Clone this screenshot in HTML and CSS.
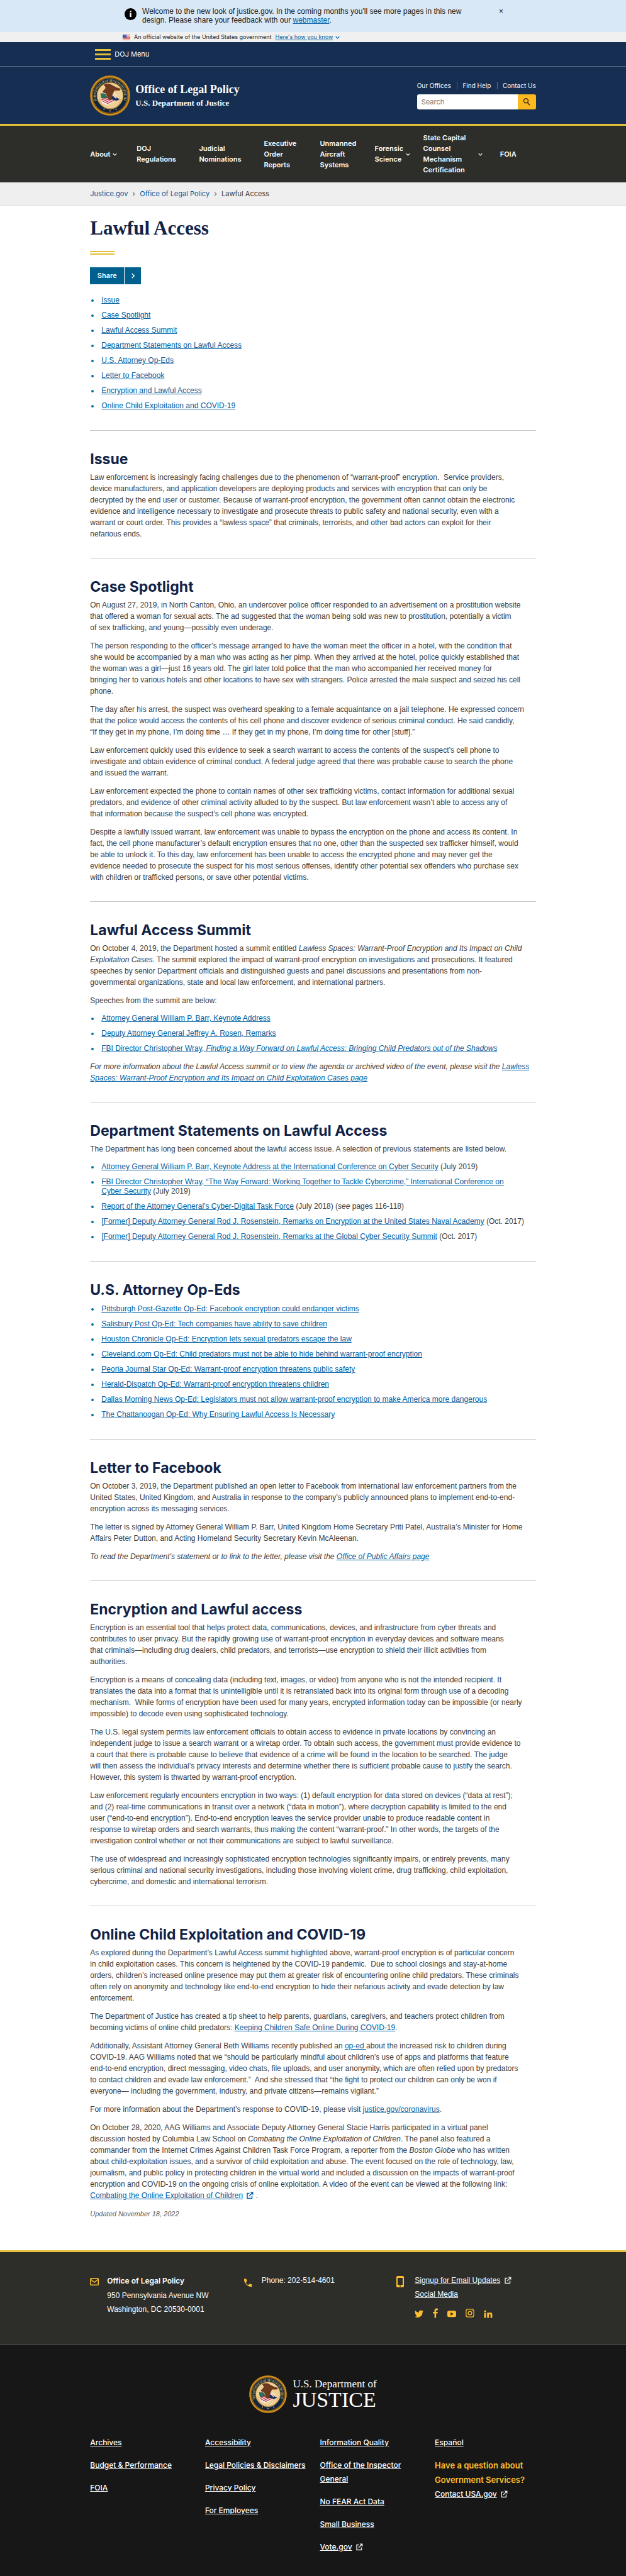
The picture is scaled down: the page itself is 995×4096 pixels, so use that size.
FILE: index.html
```html
<!DOCTYPE html>
<html lang="en">
<head>
<meta charset="utf-8">
<meta name="viewport" content="width=device-width, initial-scale=1">
<title>Office of Legal Policy | Lawful Access</title>
<link rel="stylesheet" href="styles.css">
</head>
<body>
<svg class="sprite" aria-hidden="true">
  <symbol id="seal" viewBox="0 0 100 100">
    <circle cx="50" cy="50" r="49.5" fill="#6b4a12"/>
    <circle cx="50" cy="50" r="47.5" fill="none" stroke="#cf8d1e" stroke-width="4"/>
    <circle cx="50" cy="50" r="43.5" fill="#12233f" stroke="#8f6a1c" stroke-width="1.5"/>
    <path d="M14 63A38 38 0 1 1 86 63" fill="none" stroke="#9d9258" stroke-width="6.5" stroke-dasharray="1.4 1.5 2.2 2.2 1.2 1.8"/>
    <circle cx="50" cy="50" r="32.5" fill="#eecf96" stroke="#b98427" stroke-width="1.6"/>
    <path d="M24 57a26 26 0 0 0 52 0" fill="none" stroke="#c9a76c" stroke-width="3" stroke-dasharray="1.2 1"/>
    <path d="M26 45l10-3 3 5 7 11-9 3-9-5z" fill="#2f6d58"/>
    <path d="M28 39l11 1-1 5-9-1z" fill="#f3ead9"/>
    <path d="M30 58l20-4 16 4-8 8-16 8-12-6z" fill="#f5efe9"/>
    <path d="M29 61l16-7M32 65l20-10M36 68l22-11M42 70l18-9" stroke="#c22a48" stroke-width="2.2"/>
    <path d="M56 50l18 9-8 4-14-4z" fill="#1d2c59"/>
    <path d="M34 23q12-6 21 1 12 7 21 9l-1 4q-10 1-14 0l-4 8q-2 7-3 16l-9-1q-2-10-6-16l-8-2q-1-3 3-5l5-6q-1-4-5-8z" fill="#6d3a1d"/>
    <path d="M59 44l10 8M56 48l9 9" stroke="#f5efe9" stroke-width="2"/>
    <circle cx="35" cy="84" r="1.8" fill="#c99636"/><circle cx="50" cy="88" r="1.8" fill="#c99636"/><circle cx="65" cy="84" r="1.8" fill="#c99636"/>
  </symbol>
  <symbol id="external" viewBox="0 0 24 24">
    <path d="M11 5H4v16h15v-8" fill="none" stroke="currentColor" stroke-width="3"/>
    <path d="M10 14L19 5" stroke="currentColor" stroke-width="3"/>
    <path d="M13 1h10v10z" fill="currentColor"/>
  </symbol>
  <symbol id="chevron-down" viewBox="0 0 10 10">
    <path d="M1 3l4 4 4-4" fill="none" stroke="currentColor" stroke-width="1.8"/>
  </symbol>
  <symbol id="chevron-right" viewBox="0 0 10 10">
    <path d="M3 1l4 4-4 4" fill="none" stroke="currentColor" stroke-width="1.6"/>
  </symbol>
</svg>

<div class="alert">
  <div class="alert-inner">
    <svg class="alert-icon" viewBox="0 0 20 20" aria-hidden="true"><circle cx="10" cy="10" r="10"/><path d="M8.7 4.5h2.6v2.4H8.7zM8.7 8.4h2.6v6.4H8.7z" fill="#fff"/></svg>
    <p>Welcome to the new look of justice.gov. In the coming months you'll see more pages in this new<br>design. Please share your feedback with our <a href="#">webmaster</a>.</p>
    <button class="alert-close" type="button" aria-label="Close">×</button>
  </div>
</div>

<div class="gov-banner">
  <div class="gov-inner">
    <svg class="flag" viewBox="0 0 24 17" aria-hidden="true"><path fill="#fff" d="M0 0h24v17H0z"/><path d="M0 1.2h24M0 5h24M0 8.8h24M0 12.4h24M0 16h24" stroke="#db3e1f" stroke-width="1.8"/><path fill="#1e33b1" d="M0 0h12v9.5H0z"/><path d="M1.5 2.5h10M1.5 5h10M1.5 7.5h10" stroke="#fff" stroke-dasharray="1.2 1.3"/></svg>
    <span>An official website of the United States government</span>
    <button type="button" class="gov-toggle"><span>Here's how you know</span><svg class="chev"><use href="#chevron-down"/></svg></button>
  </div>
</div>

<header>
  <div class="menu-bar">
    <div class="container">
      <button class="menu-button" type="button"><span class="burger"><i></i><i></i><i></i></span>DOJ Menu</button>
    </div>
  </div>
  <div class="masthead">
    <div class="container masthead-inner">
      <a class="brand" href="#">
        <svg class="brand-seal" role="img" aria-label="Department of Justice seal"><use href="#seal"/></svg>
        <span class="brand-text"><span class="brand-name">Office of Legal Policy</span><span class="brand-dept">U.S. Department of Justice</span></span>
      </a>
      <div class="tools">
        <ul class="utility"><li><a href="#">Our Offices</a></li><li><a href="#">Find Help</a></li><li><a href="#">Contact Us</a></li></ul>
        <form class="search">
          <input type="search" aria-label="Search" placeholder="Search">
          <button type="button" aria-label="Submit search"><svg viewBox="0 0 20 20" aria-hidden="true"><circle cx="8.5" cy="7.5" r="5" fill="none" stroke="#2d2e2a" stroke-width="2"/><path d="M12 11.5l5 6" stroke="#2d2e2a" stroke-width="2"/></svg></button>
        </form>
      </div>
    </div>
  </div>
  <nav class="main-nav" aria-label="Main">
    <ul class="container">
      <li><a href="#">About</a><svg class="chev"><use href="#chevron-down"/></svg></li>
      <li><a href="#">DOJ<br>Regulations</a></li>
      <li><a href="#">Judicial<br>Nominations</a></li>
      <li><a href="#">Executive<br>Order<br>Reports</a></li>
      <li><a href="#">Unmanned<br>Aircraft<br>Systems</a></li>
      <li><a href="#">Forensic<br>Science</a><svg class="chev"><use href="#chevron-down"/></svg></li>
      <li class="wide"><a href="#">State Capital<br>Counsel<br>Mechanism<br>Certification</a><svg class="chev"><use href="#chevron-down"/></svg></li>
      <li><a href="#">FOIA</a></li>
    </ul>
  </nav>
</header>

<nav class="breadcrumb" aria-label="Breadcrumbs">
  <ol class="container">
    <li><a href="#">Justice.gov</a><svg class="chev"><use href="#chevron-right"/></svg></li>
    <li><a href="#">Office of Legal Policy</a><svg class="chev"><use href="#chevron-right"/></svg></li>
    <li>Lawful Access</li>
  </ol>
</nav>

<main class="container">
  <h1>Lawful Access</h1>
  <div class="title-rule"></div>
  <button class="share" type="button"><span class="share-label">Share</span><span class="share-arrow"><svg class="chev"><use href="#chevron-right"/></svg></span></button>
  <ul class="links toc">
    <li><a href="#issue">Issue</a></li>
    <li><a href="#case">Case Spotlight</a></li>
    <li><a href="#summit">Lawful Access Summit</a></li>
    <li><a href="#statements">Department Statements on Lawful Access</a></li>
    <li><a href="#opeds">U.S. Attorney Op-Eds</a></li>
    <li><a href="#letter">Letter to Facebook</a></li>
    <li><a href="#encryption">Encryption and Lawful Access</a></li>
    <li><a href="#covid">Online Child Exploitation and COVID-19</a></li>
  </ul>

  <section id="issue">
    <h2>Issue</h2>
    <p>Law enforcement is increasingly facing challenges due to the phenomenon of “warrant-proof” encryption.&nbsp; Service providers,<br>
    device manufacturers, and application developers are deploying products and services with encryption that can only be<br>
    decrypted by the end user or customer. Because of warrant-proof encryption, the government often cannot obtain the electronic<br>
    evidence and intelligence necessary to investigate and prosecute threats to public safety and national security, even with a<br>
    warrant or court order. This provides a “lawless space” that criminals, terrorists, and other bad actors can exploit for their<br>
    nefarious ends.</p>
  </section>

  <section id="case">
    <h2>Case Spotlight</h2>
    <p>On August 27, 2019, in North Canton, Ohio, an undercover police officer responded to an advertisement on a prostitution website<br>
    that offered a woman for sexual acts. The ad suggested that the woman being sold was new to prostitution, potentially a victim<br>
    of sex trafficking, and young—possibly even underage.</p>
    <p>The person responding to the officer’s message arranged to have the woman meet the officer in a hotel, with the condition that<br>
    she would be accompanied by a man who was acting as her pimp. When they arrived at the hotel, police quickly established that<br>
    the woman was a girl—just 16 years old. The girl later told police that the man who accompanied her received money for<br>
    bringing her to various hotels and other locations to have sex with strangers. Police arrested the male suspect and seized his cell<br>
    phone.</p>
    <p>The day after his arrest, the suspect was overheard speaking to a female acquaintance on a jail telephone. He expressed concern<br>
    that the police would access the contents of his cell phone and discover evidence of serious criminal conduct. He said candidly,<br>
    “If they get in my phone, I’m doing time … If they get in my phone, I’m doing time for other [stuff].”</p>
    <p>Law enforcement quickly used this evidence to seek a search warrant to access the contents of the suspect’s cell phone to<br>
    investigate and obtain evidence of criminal conduct. A federal judge agreed that there was probable cause to search the phone<br>
    and issued the warrant.</p>
    <p>Law enforcement expected the phone to contain names of other sex trafficking victims, contact information for additional sexual<br>
    predators, and evidence of other criminal activity alluded to by the suspect. But law enforcement wasn’t able to access any of<br>
    that information because the suspect’s cell phone was encrypted.</p>
    <p>Despite a lawfully issued warrant, law enforcement was unable to bypass the encryption on the phone and access its content. In<br>
    fact, the cell phone manufacturer’s default encryption ensures that no one, other than the suspected sex trafficker himself, would<br>
    be able to unlock it. To this day, law enforcement has been unable to access the encrypted phone and may never get the<br>
    evidence needed to prosecute the suspect for his most serious offenses, identify other potential sex offenders who purchase sex<br>
    with children or trafficked persons, or save other potential victims.</p>
  </section>

  <section id="summit">
    <h2>Lawful Access Summit</h2>
    <p>On October 4, 2019, the Department hosted a summit entitled <em>Lawless Spaces: Warrant-Proof Encryption and Its Impact on Child<br>
    Exploitation Cases</em>. The summit explored the impact of warrant-proof encryption on investigations and prosecutions. It featured<br>
    speeches by senior Department officials and distinguished guests and panel discussions and presentations from non-<br>
    governmental organizations, state and local law enforcement, and international partners.</p>
    <p>Speeches from the summit are below:</p>
    <ul class="links">
      <li><a href="#">Attorney General William P. Barr, Keynote Address</a></li>
      <li><a href="#">Deputy Attorney General Jeffrey A. Rosen, Remarks</a></li>
      <li><a href="#">FBI Director Christopher Wray, <em>Finding a Way Forward on Lawful Access: Bringing Child Predators out of the Shadows</em></a></li>
    </ul>
    <p><em>For more information about the Lawful Access summit or to view the agenda or archived video of the event, please visit the <a href="#">Lawless<br>
    Spaces: Warrant-Proof Encryption and Its Impact on Child Exploitation Cases page</a></em></p>
  </section>

  <section id="statements">
    <h2>Department Statements on Lawful Access</h2>
    <p>The Department has long been concerned about the lawful access issue. A selection of previous statements are listed below.</p>
    <ul class="links">
      <li><a href="#">Attorney General William P. Barr, Keynote Address at the International Conference on Cyber Security</a> (July 2019)</li>
      <li><a href="#">FBI Director Christopher Wray, “The Way Forward: Working Together to Tackle Cybercrime,” International Conference on<br>
      Cyber Security</a> (July 2019)</li>
      <li><a href="#">Report of the Attorney General’s Cyber-Digital Task Force</a> (July 2018) (<em>see</em> pages 116-118)</li>
      <li><a href="#">[Former] Deputy Attorney General Rod J. Rosenstein, Remarks on Encryption at the United States Naval Academy</a> (Oct. 2017)</li>
      <li><a href="#">[Former] Deputy Attorney General Rod J. Rosenstein, Remarks at the Global Cyber Security Summit</a> (Oct. 2017)</li>
    </ul>
  </section>

  <section id="opeds">
    <h2>U.S. Attorney Op-Eds</h2>
    <ul class="links">
      <li><a href="#">Pittsburgh Post-Gazette Op-Ed: Facebook encryption could endanger victims</a></li>
      <li><a href="#">Salisbury Post Op-Ed: Tech companies have ability to save children</a></li>
      <li><a href="#">Houston Chronicle Op-Ed: Encryption lets sexual predators escape the law</a></li>
      <li><a href="#">Cleveland.com Op-Ed: Child predators must not be able to hide behind warrant-proof encryption</a></li>
      <li><a href="#">Peoria Journal Star Op-Ed: Warrant-proof encryption threatens public safety</a></li>
      <li><a href="#">Herald-Dispatch Op-Ed: Warrant-proof encryption threatens children</a></li>
      <li><a href="#">Dallas Morning News Op-Ed: Legislators must not allow warrant-proof encryption to make America more dangerous</a></li>
      <li><a href="#">The Chattanoogan Op-Ed: Why Ensuring Lawful Access Is Necessary</a></li>
    </ul>
  </section>

  <section id="letter">
    <h2>Letter to Facebook</h2>
    <p>On October 3, 2019, the Department published an open letter to Facebook from international law enforcement partners from the<br>
    United States, United Kingdom, and Australia in response to the company’s publicly announced plans to implement end-to-end-<br>
    encryption across its messaging services.</p>
    <p>The letter is signed by Attorney General William P. Barr, United Kingdom Home Secretary Priti Patel, Australia’s Minister for Home<br>
    Affairs Peter Dutton, and Acting Homeland Security Secretary Kevin McAleenan.</p>
    <p><em>To read the Department’s statement or to link to the letter, please visit the <a href="#">Office of Public Affairs page</a></em></p>
  </section>

  <section id="encryption">
    <h2>Encryption and Lawful access</h2>
    <p>Encryption is an essential tool that helps protect data, communications, devices, and infrastructure from cyber threats and<br>
    contributes to user privacy. But the rapidly growing use of warrant-proof encryption in everyday devices and software means<br>
    that criminals—including drug dealers, child predators, and terrorists—use encryption to shield their illicit activities from<br>
    authorities.</p>
    <p>Encryption is a means of concealing data (including text, images, or video) from anyone who is not the intended recipient. It<br>
    translates the data into a format that is unintelligible until it is retranslated back into its original form through use of a decoding<br>
    mechanism.&nbsp; While forms of encryption have been used for many years, encrypted information today can be impossible (or nearly<br>
    impossible) to decode even using sophisticated technology.</p>
    <p>The U.S. legal system permits law enforcement officials to obtain access to evidence in private locations by convincing an<br>
    independent judge to issue a search warrant or a wiretap order. To obtain such access, the government must provide evidence to<br>
    a court that there is probable cause to believe that evidence of a crime will be found in the location to be searched. The judge<br>
    will then assess the individual’s privacy interests and determine whether there is sufficient probable cause to justify the search.<br>
    However, this system is thwarted by warrant-proof encryption.</p>
    <p>Law enforcement regularly encounters encryption in two ways: (1) default encryption for data stored on devices (“data at rest”);<br>
    and (2) real-time communications in transit over a network (“data in motion”), where decryption capability is limited to the end<br>
    user (“end-to-end encryption”). End-to-end encryption leaves the service provider unable to produce readable content in<br>
    response to wiretap orders and search warrants, thus making the content “warrant-proof.” In other words, the targets of the<br>
    investigation control whether or not their communications are subject to lawful surveillance.</p>
    <p>The use of widespread and increasingly sophisticated encryption technologies significantly impairs, or entirely prevents, many<br>
    serious criminal and national security investigations, including those involving violent crime, drug trafficking, child exploitation,<br>
    cybercrime, and domestic and international terrorism.</p>
  </section>

  <section id="covid">
    <h2>Online Child Exploitation and COVID-19</h2>
    <p>As explored during the Department’s Lawful Access summit highlighted above, warrant-proof encryption is of particular concern<br>
    in child exploitation cases. This concern is heightened by the COVID-19 pandemic.&nbsp; Due to school closings and stay-at-home<br>
    orders, children’s increased online presence may put them at greater risk of encountering online child predators. These criminals<br>
    often rely on anonymity and technology like end-to-end encryption to hide their nefarious activity and evade detection by law<br>
    enforcement.</p>
    <p>The Department of Justice has created a tip sheet to help parents, guardians, caregivers, and teachers protect children from<br>
    becoming victims of online child predators: <a href="#">Keeping Children Safe Online During COVID-19</a>.</p>
    <p>Additionally, Assistant Attorney General Beth Williams recently published an <a href="#">op-ed </a>about the increased risk to children during<br>
    COVID-19. AAG Williams noted that we “should be particularly mindful about children’s use of apps and platforms that feature<br>
    end-to-end encryption, direct messaging, video chats, file uploads, and user anonymity, which are often relied upon by predators<br>
    to contact children and evade law enforcement.”&nbsp; And she stressed that “the fight to protect our children can only be won if<br>
    everyone— including the government, industry, and private citizens—remains vigilant.”</p>
    <p>For more information about the Department’s response to COVID-19, please visit <a href="#">justice.gov/coronavirus</a>.</p>
    <p>On October 28, 2020, AAG Williams and Associate Deputy Attorney General Stacie Harris participated in a virtual panel<br>
    discussion hosted by Columbia Law School on <em>Combating the Online Exploitation of Children</em>. The panel also featured a<br>
    commander from the Internet Crimes Against Children Task Force Program, a reporter from the <em>Boston Globe</em> who has written<br>
    about child-exploitation issues, and a survivor of child exploitation and abuse. The event focused on the role of technology, law,<br>
    journalism, and public policy in protecting children in the virtual world and included a discussion on the impacts of warrant-proof<br>
    encryption and COVID-19 on the ongoing crisis of online exploitation. A video of the event can be viewed at the following link:<br>
    <a href="#">Combating the Online Exploitation of Children</a> <svg class="ext ext-link"><use href="#external"/></svg> .</p>
    <p class="updated">Updated November 18, 2022</p>
  </section>
</main>

<footer>
  <div class="contact">
    <div class="container contact-grid">
      <div class="contact-item">
        <svg class="icon-mail" viewBox="0 0 28 28" aria-hidden="true"><rect x="1.5" y="3.5" width="25" height="21" rx="2" fill="none" stroke="currentColor" stroke-width="3"/><path d="M3 7l11 9 11-9" fill="none" stroke="currentColor" stroke-width="3"/></svg>
        <address><strong>Office of Legal Policy</strong><br>950 Pennsylvania Avenue NW<br>Washington, DC 20530-0001</address>
      </div>
      <div class="contact-item">
        <svg class="icon-phone" viewBox="0 0 28 28" aria-hidden="true"><path d="M2 2h7l2 8-4 4q3 5 8 8l4-4 8 2v7q-11 1-18-7Q1 12 2 2z" fill="currentColor"/></svg>
        <span>Phone: 202-514-4601</span>
      </div>
      <div class="contact-item">
        <svg class="icon-mobile" viewBox="0 0 24 36" aria-hidden="true"><path fill-rule="evenodd" d="M4 0h16q4 0 4 4v28q0 4-4 4H4q-4 0-4-4V4q0-4 4-4zM4 6v22h16V6zM12 30a2 2 0 1 0 .1 0z" fill="currentColor"/></svg>
        <div>
          <a href="#">Signup for Email Updates</a> <svg class="ext"><use href="#external"/></svg><br>
          <a href="#">Social Media</a>
          <div class="social">
            <a href="#" aria-label="Twitter"><svg viewBox="0 0 24 24"><path d="M24 5a10 10 0 0 1-2.800.8 5 5 0 0 0 2.100-2.700 10 10 0 0 1-3.100 1.200 4.900 4.900 0 0 0-8.400 4.500A14 14 0 0 1 1.700 3.600a4.900 4.900 0 0 0 1.500 6.600 5 5 0 0 1-2.200-.6 4.900 4.900 0 0 0 3.900 4.900 5 5 0 0 1-2.200.1 4.900 4.900 0 0 0 4.600 3.400A10 10 0 0 1 0 20a14 14 0 0 0 21.500-12.400A10 10 0 0 0 24 5z" fill="currentColor"/></svg></a>
            <a href="#" aria-label="Facebook" class="tall narrow"><svg viewBox="0 0 14 26"><path d="M9 26V14h4l.6-4.600H9V6.500Q9 4.500 11 4.500h3V.3Q12.500 0 10.500 0 4.500 0 4.500 6v3.400H0V14h4.500v12z" fill="currentColor"/></svg></a>
            <a href="#" aria-label="YouTube"><svg viewBox="0 0 24 24"><path fill-rule="evenodd" d="M4 4h16q4 0 4 4v9q0 4-4 4H4q-4 0-4-4V8q0-4 4-4zM9 8v9l8-4.500z" fill="currentColor"/></svg></a>
            <a href="#" aria-label="Instagram" class="tall"><svg viewBox="0 0 24 24"><rect x="1.500" y="1.500" width="21" height="21" rx="5" fill="none" stroke="currentColor" stroke-width="2.200"/><circle cx="12" cy="12" r="5" fill="none" stroke="currentColor" stroke-width="2.200"/><circle cx="18" cy="6" r="1.400" fill="currentColor"/></svg></a>
            <a href="#" aria-label="LinkedIn"><svg viewBox="0 0 24 24"><path d="M1 9h5v14H1zM1 3h5v4H1zM9 9h4.500v2q1.500-2.400 4.500-2.400 5 0 5 6.400v8h-4.800v-7.500q0-3-2-3-2.400 0-2.400 3V23H9z" fill="currentColor"/></svg></a>
          </div>
        </div>
      </div>
    </div>
  </div>
  <div class="bottom">
    <a class="doj" href="#">
      <svg class="doj-seal" role="img" aria-label="Department of Justice seal"><use href="#seal"/></svg>
      <span class="doj-text"><span class="doj-small">U.S. Department of</span><span class="doj-big">JUSTICE</span></span>
    </a>
    <div class="container footer-grid">
      <ul><li><a href="#">Archives</a></li><li><a href="#">Budget &amp; Performance</a></li><li><a href="#">FOIA</a></li></ul>
      <ul><li><a href="#">Accessibility</a></li><li><a href="#">Legal Policies &amp; Disclaimers</a></li><li><a href="#">Privacy Policy</a></li><li><a href="#">For Employees</a></li></ul>
      <ul><li><a href="#">Information Quality</a></li><li><a href="#">Office of the Inspector<br>General</a></li><li><a href="#">No FEAR Act Data</a></li><li><a href="#">Small Business</a></li><li><a href="#">Vote.gov</a> <svg class="ext"><use href="#external"/></svg></li></ul>
      <div>
        <ul><li><a href="#">Español</a></li></ul>
        <h3>Have a question about Government Services?</h3>
        <a href="#">Contact USA.gov</a> <svg class="ext"><use href="#external"/></svg>
      </div>
    </div>
  </div>
</footer>
</body>
</html>
```
FILE: styles.css
```css
:root {
  --navy: #162e51;
  --heading: #112347;
  --ink: #3a3c40;
  --link: #005ea2;
  --gold: #e5c038;
  --amber: #ffbe2e;
  --olive: #2d2e29;
  --text: "Liberation Sans", Arial, sans-serif;
  --display: Inter, "Liberation Sans", sans-serif;
  --serif: "Liberation Serif", serif;
}

* { box-sizing: border-box; }

body {
  margin: 0;
  background: #fff;
  color: var(--ink);
  font: 12px/18px var(--text);
}

h1, h2, h3, p, ul, ol { margin: 0; padding: 0; }
ul, ol { list-style: none; }
a { color: var(--link); }
button { border: 0; padding: 0; background: none; color: inherit; font: inherit; cursor: pointer; }
address { font-style: normal; }
svg { display: block; flex: none; }

.sprite { position: absolute; width: 0; height: 0; }
.chev { width: 7px; height: 7px; }
.container { width: 71.2%; margin: 0 auto; }

/* Alert */
.alert { background: #d9e8f6; color: #1b1b1b; }
.alert-inner { display: flex; gap: 9px; width: 60.8%; margin: 0 auto; padding: 11px 0 12px 3px; line-height: 14px; }
.alert-inner p { flex: 0 1 530px; }
.alert-icon { width: 19px; height: 19px; margin-top: 2px; }
.alert-close { align-self: flex-start; margin-left: auto; }

/* Government banner */
.gov-banner { background: #f0f0f0; color: #1b1b1b; font: 9px/16px var(--display); }
.gov-inner { display: flex; align-items: center; gap: 6px; width: 60.8%; margin: 0 auto; }
.flag { width: 12px; height: 9px; }
.gov-toggle { display: flex; align-items: center; gap: 4px; color: var(--link); }
.gov-toggle span { text-decoration: underline; }

/* Header */
header, .breadcrumb { font-family: var(--display); }
.menu-bar { background: var(--navy); border-bottom: 1px solid #5a6d8c; }
.menu-button { display: flex; align-items: center; gap: 6px; height: 38px; padding: 0 8px; color: #fff; font-size: 11px; }
.burger { display: grid; gap: 4px; width: 25px; }
.burger i { height: 3px; background: var(--gold); }

.masthead { background: var(--navy); border-bottom: 3px solid var(--gold); }
.masthead-inner { display: flex; justify-content: space-between; align-items: center; height: 91px; }
.brand { display: flex; align-items: center; gap: 8px; color: #fff; font-family: var(--serif); font-weight: 700; text-decoration: none; }
.brand-seal { width: 64px; height: 64px; }
.brand-name, .brand-dept { display: block; }
.brand-name { font-size: 18px; line-height: 24px; }
.brand-dept { font-size: 13px; line-height: 20px; }
.tools { width: 189px; }
.utility { display: flex; justify-content: space-between; margin-bottom: 8px; font-size: 10px; line-height: 12px; }
.utility li + li { padding-left: 8px; border-left: 1px solid #5a6d8c; }
.utility a { color: #fff; text-decoration: none; }
.search { display: flex; height: 24px; overflow: hidden; border-radius: 3px; }
.search input { flex: 1; min-width: 0; padding: 0 7px; border: 0; background: #fff; font: 11px var(--display); }
.search input::placeholder { color: #757575; opacity: 1; }
.search button { display: grid; place-items: center; width: 29px; background: #fdb81e; }
.search svg { width: 14px; height: 14px; }

.main-nav { background: var(--olive); }
.main-nav ul { display: grid; grid-template-columns: 74fr 99fr 103fr 89fr 87fr 77fr 122fr 57fr; align-items: center; padding: 11px 0; }
.main-nav li { display: flex; align-items: center; gap: 4px; color: #fff; font-size: 11px; font-weight: 600; line-height: 17px; }
.main-nav a { color: #fff; text-decoration: none; }
.main-nav .wide { justify-content: space-between; padding-right: 28px; }

/* Breadcrumb */
.breadcrumb { background: #efefef; border-bottom: 1px solid #dcdee0; }
.breadcrumb ol { display: flex; padding: 9px 0; font-size: 11px; }
.breadcrumb li { display: flex; align-items: center; }
.breadcrumb .chev { margin: 0 6px; color: #71767a; }
.breadcrumb a { text-decoration: none; }

/* Content */
h1 { padding: 18px 0 18px; color: var(--heading); font: 700 31px/36px var(--serif); }
.title-rule { width: 39px; height: 6px; border: solid var(--gold); border-width: 2px 0; }
.share { display: flex; margin: 20px 0 18px; background: #00618f; color: #fff; font: 600 11px/27px var(--display); }
.share-label { width: 54px; }
.share-arrow { display: grid; place-items: center; align-self: stretch; width: 27px; border-left: 1px solid #fff; }
.share .chev { width: 9px; height: 9px; }

.links { margin: 12px 0; line-height: 15px; }
.links li { position: relative; padding-left: 18px; }
.links li + li { margin-top: 9px; }
.links li::before { content: ""; position: absolute; left: 2px; top: 6px; width: 4px; height: 4px; border-radius: 50%; background: #0076a8; }
.toc { margin: 0 0 31px; }

section { padding: 32px 0 29px; border-top: 1px solid #c6cace; }
h2 { margin-bottom: 7px; color: var(--heading); font: 700 23px/26px var(--display); }
p + p { margin-top: 11px; }
h2 + .links { margin-top: 10px; }
section .links:last-child { margin-bottom: 2px; }
.ext { display: inline-block; width: 12px; height: 12px; margin-left: 2px; vertical-align: -2px; color: #dfe1e2; }
.ext-link { color: var(--link); }
.updated { color: #5c5c5c; font-size: 11px; font-style: italic; }

/* Footer */
footer { color: #fff; font: 500 12px/22px var(--display); }
footer a { color: #fff; }
.contact { margin-top: 20px; padding: 34px 0 42px; border-top: 3px solid var(--gold); background: var(--olive); }
.contact-grid { display: grid; grid-template-columns: repeat(3, 1fr); gap: 22px; }
.contact-item { display: flex; align-items: flex-start; color: #fff; font: 12px/22px var(--text); }
.contact-item > svg { color: var(--amber); }
.contact-item strong { font: 600 12px/24px var(--display); }
.icon-mail { width: 14px; height: 16px; margin: 5px 13px 0 0; }
.icon-phone { width: 14px; height: 17px; margin: 6px 15px 0 0; }
.icon-mobile { width: 12px; height: 18px; margin: 4px 17px 0 0; }
.social { display: flex; align-items: flex-end; gap: 15px; height: 27px; }
.social a { color: var(--amber); }
.social svg { width: 14px; height: 14px; }
.social .tall svg { height: 16px; }
.social .narrow svg { width: 8px; }

.bottom { padding: 48px 0 22px; border-top: 1px solid #565c65; background: #171717; }
.doj { display: flex; justify-content: center; align-items: center; gap: 9px; margin-bottom: 36px; font-family: var(--serif); font-weight: 400; text-decoration: none; }
.doj-seal { width: 60px; height: 60px; }
.doj-small, .doj-big { display: block; }
.doj-small { font-size: 17px; line-height: 18px; }
.doj-big { font-size: 34px; line-height: 32px; }
.footer-grid { display: grid; grid-template-columns: repeat(4, 1fr); gap: 22px; }
.footer-grid li { margin-bottom: 14px; white-space: nowrap; }
.footer-grid h3 { color: var(--amber); font-size: 13px; font-weight: 600; line-height: 23px; }
```
